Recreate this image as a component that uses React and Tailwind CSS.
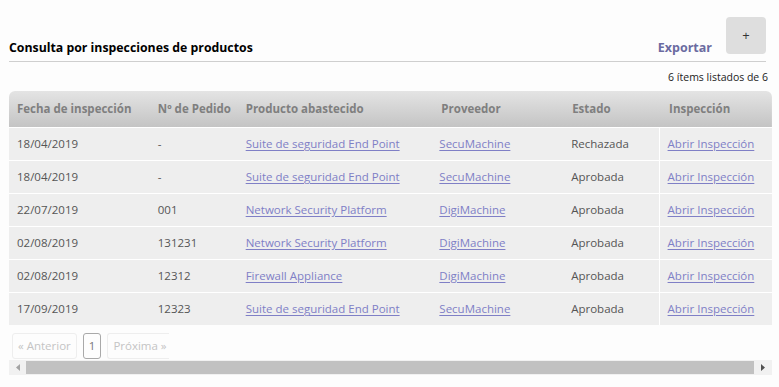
import React from "react";

const rows = [
  { fecha: "18/04/2019", pedido: "-", producto: "Suite de seguridad End Point", proveedor: "SecuMachine", estado: "Rechazada" },
  { fecha: "18/04/2019", pedido: "-", producto: "Suite de seguridad End Point", proveedor: "SecuMachine", estado: "Aprobada" },
  { fecha: "22/07/2019", pedido: "001", producto: "Network Security Platform", proveedor: "DigiMachine", estado: "Aprobada" },
  { fecha: "02/08/2019", pedido: "131231", producto: "Network Security Platform", proveedor: "DigiMachine", estado: "Aprobada" },
  { fecha: "02/08/2019", pedido: "12312", producto: "Firewall Appliance", proveedor: "DigiMachine", estado: "Aprobada" },
  { fecha: "17/09/2019", pedido: "12323", producto: "Suite de seguridad End Point", proveedor: "SecuMachine", estado: "Aprobada" }
];

const headers = ["Fecha de inspección", "Nº de Pedido", "Producto abastecido", "Proveedor", "Estado", "Inspección"];
const widths = ["w-[141px]", "w-[88px]", "w-[194px]", "w-[132px]", "w-[96px]", "w-[113px]"];

const link = "text-[#7f7fc6] underline underline-offset-2";

export default function App() {
  return (
    <div className="min-h-[387px] bg-[#fdfdfd] font-['Open_Sans',sans-serif] text-[11.5px]">
      <div className="pl-[9px] pr-[13px] pt-[17px]">
        <div className="flex items-end justify-between border-b border-[#cfcfcf] pb-[4px]">
          <h1 className="text-[12.3px] font-bold leading-[18px] text-black">Consulta por inspecciones de productos</h1>
          <div className="flex items-end gap-[14px]">
            <span className="text-[12.5px] font-bold leading-[18px] text-[#6b6ba1]">Exportar</span>
            <button className="mb-[3px] flex h-[37px] w-[40px] items-center justify-center rounded-[4px] bg-[#dedede] text-[13px] text-[#333]">+</button>
          </div>
        </div>
      </div>

      <div className="pl-[9px] pr-[7px]">
        <div className="pr-[4px] pt-[8px] text-right text-[10.5px] leading-[15px] text-[#222]">6 ítems listados de 6</div>

        <table className="mt-[6px] table-fixed border-collapse">
          <thead>
            <tr className="h-[36px] bg-gradient-to-b from-[#e4e4e4] to-[#c4c4c4]">
              {headers.map((h, i) => (
                <th
                  key={h}
                  className={`${widths[i]} text-left font-bold text-[#7f7f7f] ${i === 3 || i === 5 ? "pl-[10px]" : "pl-[8px]"} ${i === 4 ? "pl-[9px]" : ""} ${i === 0 ? "rounded-tl-[6px]" : ""} ${i === 5 ? "rounded-tr-[6px]" : ""}`}
                >
                  {h}
                </th>
              ))}
            </tr>
          </thead>
          <tbody>
            {rows.map((r, i) => (
              <tr key={i} className="h-[33px] border-t border-white bg-[#eeeeee] text-[#555]">
                <td className="pl-[8px]">{r.fecha}</td>
                <td className="pl-[8px]">{r.pedido}</td>
                <td className="pl-[8px]"><a className={link}>{r.producto}</a></td>
                <td className="pl-[8px]"><a className={link}>{r.proveedor}</a></td>
                <td className="pl-[8px]">{r.estado}</td>
                <td className="border-l border-white pl-[8px]"><a className={link}>Abrir Inspección</a></td>
              </tr>
            ))}
          </tbody>
        </table>

        <div className="flex items-center gap-[6px] pl-[3px] pt-[8px]">
          <span className="flex h-[26px] items-center whitespace-nowrap rounded-[3px] border border-[#eeeeee] px-[5px] text-[#c4c4c4]">« Anterior</span>
          <span className="flex h-[26px] items-center rounded-[3px] border border-[#a9a9a9] px-[5px] text-[#777]">1</span>
          <span className="flex h-[26px] w-[62px] items-center overflow-hidden whitespace-nowrap rounded-l-[3px] border border-r-0 border-[#eeeeee] pl-[5px] text-[#c4c4c4]">Próxima »</span>
        </div>

        <div className="mt-[1px] flex h-[15px] items-center bg-[#f1f1f1]">
          <div className="flex w-[17px] items-center justify-center">
            <svg width="4" height="7" viewBox="0 0 4 7"><path d="M4 0 L0 3.5 L4 7 Z" fill="#a3a3a3" /></svg>
          </div>
          <div className="h-[13px] flex-1 bg-[#c1c1c1]" />
          <div className="flex w-[18px] items-center justify-center">
            <svg width="4" height="7" viewBox="0 0 4 7"><path d="M0 0 L4 3.5 L0 7 Z" fill="#505050" /></svg>
          </div>
        </div>
      </div>
    </div>
  );
}
